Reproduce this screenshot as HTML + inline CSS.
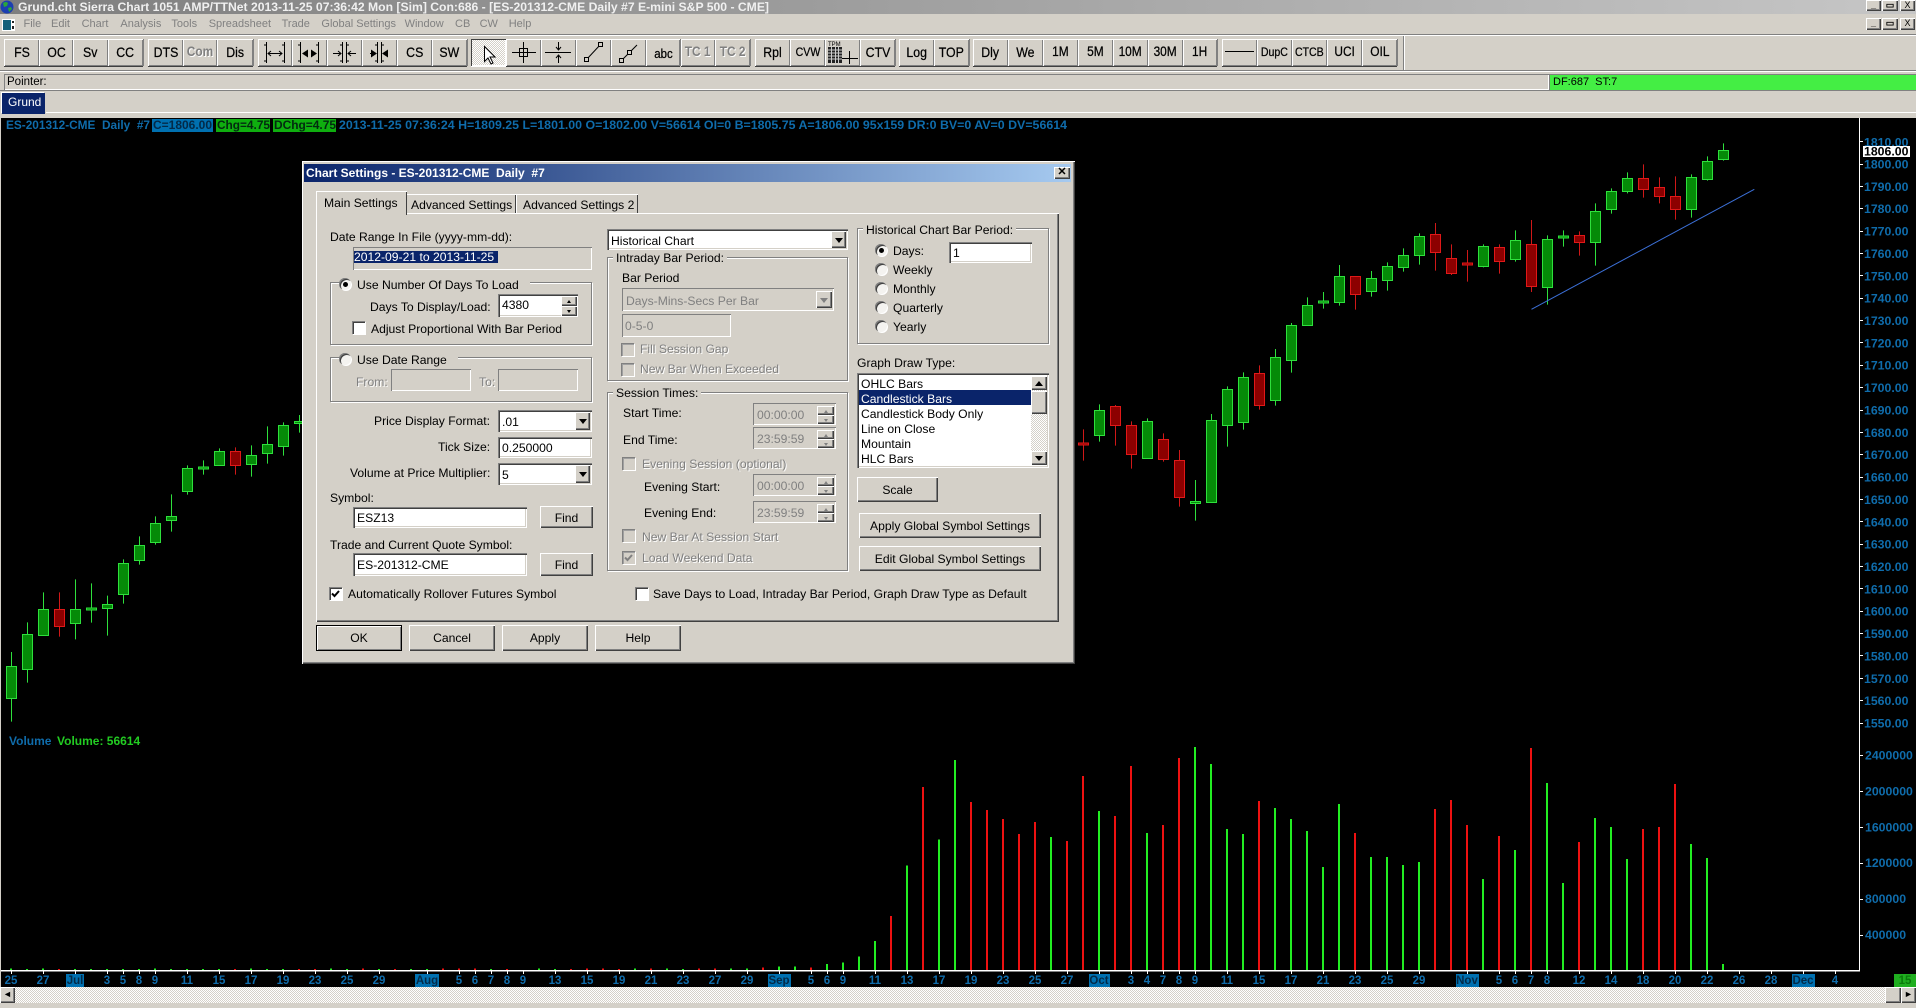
<!DOCTYPE html>
<html><head><meta charset="utf-8"><title>Sierra Chart</title>
<style>
html,body{margin:0;padding:0;background:#d4d0c8}
#p{position:relative;width:1916px;height:1008px;overflow:hidden;background:#d4d0c8;font-family:"Liberation Sans",sans-serif}
.a{position:absolute;box-sizing:border-box}
.t{position:absolute;white-space:nowrap;font:12.15px/14px "Liberation Sans",sans-serif;height:14px;color:#000}
.bg{background:#d4d0c8;padding:0 3px;margin-left:-3px}
.ds{color:#808080;text-shadow:1px 1px 0 #fff}
.gr{color:#808080}
.m{position:absolute;top:18px;font:11px/13px "Liberation Sans",sans-serif;color:#808080;white-space:nowrap}
.b{position:absolute;top:39px;height:27px;background:#d4d0c8;box-sizing:border-box;box-shadow:inset 1px 1px #fff,inset -1px -1px #808080,0 1px #404040,1px 0 #808080;text-align:center;font:14px/26px "Liberation Sans",sans-serif;color:#000;white-space:nowrap;overflow:hidden;-webkit-text-stroke:.25px #000}
.b span{display:inline-block;transform:scaleX(.88)}
.b svg{position:absolute;left:0;top:0}
.b.s{font-size:12px}
.b.dis{color:#808080;font-weight:bold;font-size:13.5px;text-shadow:1px 1px 0 #fff;-webkit-text-stroke:0}
.rb{position:absolute;box-sizing:border-box;background:#d4d0c8;box-shadow:inset 1px 1px #fff,inset -1px -1px #404040,inset -2px -2px #808080;text-align:center;font:12.15px/26px "Liberation Sans",sans-serif;color:#000;white-space:nowrap}
.in{position:absolute;box-sizing:border-box;background:#fff;box-shadow:inset 1px 1px #808080,inset 2px 2px #404040,inset -1px -1px #fff,inset -2px -2px #d4d0c8;font:12.15px/22px "Liberation Sans",sans-serif;color:#000;padding-left:4px;white-space:nowrap}
.in.dd{background:#d4d0c8;color:#808080;box-shadow:inset 1px 1px #808080,inset -1px -1px #fff;line-height:24px}
.gb{position:absolute;box-sizing:border-box;border:1px solid #808080;box-shadow:1px 1px #fff,inset 1px 1px #fff}
.rd{position:absolute;width:12px;height:12px;margin-left:-1px;border-radius:50%;background:#f4f3f0;box-shadow:inset 1px 1px 0 #808080,inset 2px 2px 0 #404040,1px 1px 0 #fff}
.rd.on::after{content:"";position:absolute;left:4px;top:4px;width:5px;height:5px;border-radius:50%;background:#000}
.cb{position:absolute;box-sizing:border-box;width:13px;height:13px;margin-left:-1px;background:#fff;box-shadow:inset 1px 1px #808080,inset 2px 2px #404040,1px 1px #fff}
.cb.dd{background:#d4d0c8;box-shadow:inset 1px 1px #808080,inset 2px 2px #a0a0a0,1px 1px #fff}
.cb svg{position:absolute;left:0;top:0}
.ar{position:absolute;box-sizing:border-box;margin-left:-1px;background:#d4d0c8;box-shadow:inset 1px 1px #fff,inset -1px -1px #404040,inset -2px -2px #808080}
.ar::after{content:"";position:absolute;left:50%;top:50%;margin:-2px 0 0 -4px;border:4px solid transparent;border-bottom:0;border-top:5px solid #000}
.ar.up::after{border-top:0;border-bottom:5px solid #000}
.ar.gy::after{border-top-color:#808080;border-bottom-color:#808080}
.ar.sm::after{margin:-1px 0 0 -2px;border-width:2px;border-top-width:3px;border-bottom-width:0}
.ar.sm.up::after{border-top-width:0;border-bottom-width:3px}
.li{position:absolute;left:861px;font:12.15px/14px "Liberation Sans",sans-serif;white-space:nowrap;color:#000}
.dth{background:repeating-conic-gradient(#d4d0c8 0 25%,#fff 0 50%) 0 0/2px 2px}
text{font-family:"Liberation Sans",sans-serif}
.pl{font-size:12.3px;font-weight:bold;fill:#0f6cab;dominant-baseline:central}
.dl{font-size:11.5px;font-weight:bold;fill:#0f6cab;text-anchor:middle;dominant-baseline:central}
.dk{fill:#032a48}
</style></head><body><div id="p">

<!-- title bar -->
<div class="a" style="left:0;top:0;width:1916px;height:14px;background:linear-gradient(90deg,#7e7e7e,#c6c6c6)"></div>
<svg class="a" style="left:0;top:0" width="800" height="14">
<circle cx="7" cy="7" r="6.5" fill="#1c3fb0"/><path d="M3 3q3-2 5 0l-1 3-3 1zM8 8l3-1 1 2-3 3z" fill="#2aa53a"/>
<text x="18" y="11" font-size="11.5" font-weight="bold" fill="#f0f0f0" textLength="751" lengthAdjust="spacingAndGlyphs">Grund.cht  Sierra Chart 1051 AMP/TTNet 2013-11-25  07:36:42 Mon [Sim]  Con:686 - [ES-201312-CME  Daily  #7  E-mini S&amp;P 500 - CME]</text></svg>
<div class="rb" style="left:1866px;top:0;width:15px;height:11px;font:bold 9px/10px 'Liberation Sans'">_</div>
<div class="rb" style="left:1882px;top:0;width:16px;height:11px;font:bold 9px/10px 'Liberation Sans'">&#9645;</div>
<div class="rb" style="left:1900px;top:0;width:15px;height:11px;font:9px/10px 'Liberation Sans'">X</div>

<!-- menu -->
<svg class="a" style="left:2px;top:19px" width="13" height="12"><rect width="13" height="12" fill="#fff"/><rect x="1" y="1" width="8" height="10" fill="#12607a"/><rect x="10" y="2" width="2" height="2" fill="#222"/><rect x="10" y="7" width="2" height="3" fill="#222"/></svg>
<div class="m" style="left:23.5px">File</div><div class="m" style="left:51px">Edit</div><div class="m" style="left:81.6px">Chart</div><div class="m" style="left:120.4px">Analysis</div><div class="m" style="left:171.4px">Tools</div><div class="m" style="left:208.7px">Spreadsheet</div><div class="m" style="left:281.6px">Trade</div><div class="m" style="left:321.4px">Global Settings</div><div class="m" style="left:404.6px">Window</div><div class="m" style="left:455px">CB</div><div class="m" style="left:479.6px">CW</div><div class="m" style="left:508.7px">Help</div>
<div class="rb" style="left:1866px;top:18px;width:15px;height:12px;font:bold 9px/10px 'Liberation Sans'">_</div>
<div class="rb" style="left:1882px;top:18px;width:16px;height:12px;font:bold 9px/10px 'Liberation Sans'">&#9645;</div>
<div class="rb" style="left:1900px;top:18px;width:15px;height:12px;font:9px/11px 'Liberation Sans'">X</div>
<div class="a" style="left:0;top:34px;width:1916px;height:1px;background:#808080"></div>
<div class="a" style="left:0;top:35px;width:1916px;height:1px;background:#fff"></div>

<!-- toolbar -->
<div class="b" style="left:4px;width:35px"><span>FS</span></div>
<div class="b" style="left:39px;width:34px"><span>OC</span></div>
<div class="b" style="left:73px;width:35px"><span>Sv</span></div>
<div class="b" style="left:108px;width:35px"><span>CC</span></div>
<div class="b" style="left:148px;width:35px"><span>DTS</span></div>
<div class="b dis" style="left:183px;width:34px"><span>Com</span></div>
<div class="b" style="left:217px;width:36px"><span>Dis</span></div>
<div class="b" style="left:258px;width:34px"><svg width="34" height="27" stroke="#000" fill="none"><path d="M8.5 3v21M26.5 3v21M6 6h3M6 22h3M24 6h3M24 22h3M10 14.5h14M13 12l-3 2.5 3 2.5M21 12l3 2.5-3 2.5"/></svg></div>
<div class="b" style="left:292px;width:35px"><svg width="35" height="27" stroke="#000" fill="none"><path d="M8.5 3v21M26.5 3v21M6 6h3M6 22h3M24 6h3M24 22h3"/><path d="M10 14.5l6-4v8zM25 14.5l-6-4v8z" fill="#000" stroke="none"/></svg></div>
<div class="b" style="left:327px;width:35px"><svg width="35" height="27" stroke="#000" fill="none"><path d="M15.5 3v21M19.5 3v21M13 6h3M13 22h3M19 6h3M19 22h3M6 14.5h8M11 12l3 2.5-3 2.5M29 14.5h-8M24 12l-3 2.5 3 2.5"/></svg></div>
<div class="b" style="left:362px;width:35px"><svg width="35" height="27" stroke="#000" fill="none"><path d="M15.5 3v21M19.5 3v21M13 6h3M13 22h3M19 6h3M19 22h3"/><path d="M8 14.5h2" /><path d="M15 14.5l-6-4v8zM20 14.5l6-4v8z" fill="#000" stroke="none"/></svg></div>
<div class="b" style="left:397px;width:35px"><span>CS</span></div>
<div class="b" style="left:432px;width:35px"><span>SW</span></div>
<div class="b dth" style="left:471px;width:35px;box-shadow:inset 1px 1px #404040,inset -1px -1px #fff,0 1px #fff,1px 0 #fff"><svg width="35" height="27" fill="#fff" stroke="#000"><path d="M13.5 7.500v15l3.500-3.500 3 6 2-1-3-6h5z"/></svg></div>
<div class="b" style="left:506px;width:35px"><svg width="35" height="27" stroke="#000" fill="none"><path d="M17.500 3v21M6 13.500h24"/><rect x="13.500" y="9.500" width="8" height="8"/></svg></div>
<div class="b" style="left:541px;width:35px"><svg width="35" height="27" stroke="#000" fill="none"><path d="M4 13.500h26M17.500 3v7M17.500 17v7M15 8l2.500 3 2.500-3M15 19l2.500-3 2.500 3"/></svg></div>
<div class="b" style="left:576px;width:35px"><svg width="35" height="27" stroke="#000" fill="none"><path d="M11 20l13-14"/><rect x="8.500" y="18.500" width="4" height="4" fill="#d4d0c8"/><rect x="22.500" y="3.500" width="4" height="4" fill="#d4d0c8"/></svg></div>
<div class="b" style="left:611px;width:35px"><svg width="35" height="27" stroke="#000" fill="none"><path d="M11 21l15-15"/><rect x="8.500" y="19.500" width="4" height="4" fill="#d4d0c8"/><rect x="16.500" y="11.500" width="4" height="4" fill="#d4d0c8"/></svg></div>
<div class="b" style="left:646px;width:34px;font-size:13px;line-height:29px"><span>abc</span></div>
<div class="b dis" style="left:681px;width:34px"><span>TC 1</span></div>
<div class="b dis" style="left:715px;width:35px"><span>TC 2</span></div>
<div class="b" style="left:755px;width:35px"><span>Rpl</span></div>
<div class="b s" style="left:790px;width:35px"><span>CVW</span></div>
<div class="b" style="left:825px;width:35px"><svg width="35" height="27"><text x="3" y="7" font-size="6" fill="#000">TPM</text><rect x="3" y="8" width="14" height="16" fill="#222"/><path d="M3 11h14M3 14h14M3 17h14M3 20h14M6.500 8v16M10.500 8v16M13.500 8v16" stroke="#ccc"/><path d="M17 19.500h16M24.500 12v13" stroke="#000"/></svg></div>
<div class="b" style="left:860px;width:35px"><span>CTV</span></div>
<div class="b" style="left:899px;width:35px"><span>Log</span></div>
<div class="b" style="left:934px;width:35px"><span>TOP</span></div>
<div class="b" style="left:973px;width:35px"><span>Dly</span></div>
<div class="b" style="left:1008px;width:35px"><span>We</span></div>
<div class="b s" style="left:1043px;width:35px;font-size:13.5px"><span>1M</span></div>
<div class="b s" style="left:1078px;width:35px;font-size:13.5px"><span>5M</span></div>
<div class="b s" style="left:1113px;width:35px;font-size:13.5px"><span>10M</span></div>
<div class="b s" style="left:1148px;width:35px;font-size:13.5px"><span>30M</span></div>
<div class="b s" style="left:1183px;width:34px;font-size:13.5px"><span>1H</span></div>
<div class="b" style="left:1222px;width:35px"><svg width="35" height="27"><path d="M3 12.500h29" stroke="#000"/></svg></div>
<div class="b s" style="left:1257px;width:35px"><span>DupC</span></div>
<div class="b s" style="left:1292px;width:35px"><span>CTCB</span></div>
<div class="b" style="left:1327px;width:35px;font-size:13.5px"><span>UCI</span></div>
<div class="b" style="left:1362px;width:35px;font-size:13.5px"><span>OIL</span></div>
<div class="a" style="left:1403px;top:36px;width:1px;height:34px;background:#808080"></div>
<div class="a" style="left:1404px;top:36px;width:1px;height:34px;background:#fff"></div>
<div class="a" style="left:0;top:70px;width:1916px;height:1px;background:#808080"></div>
<div class="a" style="left:0;top:71px;width:1916px;height:1px;background:#fff"></div>

<!-- status -->
<div class="a" style="left:4px;top:74px;width:1545px;height:16px;box-shadow:inset 1px 1px #808080,inset -1px -1px #fff"></div>
<div class="t" style="left:7px;top:75px;font-size:11.5px">Pointer:</div>
<div class="a" style="left:1549px;top:74px;width:367px;height:16px;background:#44ee44;box-shadow:inset 1px 1px #808080"></div>
<div class="t" style="left:1553px;top:75px;font-size:11px">DF:687&nbsp; ST:7</div>
<div class="a" style="left:0;top:90px;width:1916px;height:1px;background:#808080"></div>
<div class="a" style="left:2px;top:93px;width:43px;height:21px;background:#0a246a;box-shadow:-1px -1px #fff;color:#fff;font:12px/18px 'Liberation Sans';padding-left:6px">Grund</div>
<div class="a" style="left:0;top:112px;width:1916px;height:1px;background:#fff;clip-path:inset(0 0 0 46px)"></div>

<!-- chart -->
<svg class="a" style="left:0;top:0" width="1916" height="1008" shape-rendering="crispEdges">
<rect x="1" y="118" width="1915" height="870" fill="#000"/>
<rect x="1859" y="118" width="1" height="853" fill="#fff"/>
<rect x="1" y="970" width="1859" height="1.500" fill="#fff"/>
<!-- info -->
<rect x="152" y="119" width="61" height="13" fill="#0070b0"/><rect x="216" y="119" width="54" height="13" fill="#0fae0f"/><rect x="273" y="119" width="63" height="13" fill="#0fae0f"/>
<g font-size="12" font-weight="bold" style="dominant-baseline:central">
<text x="6" y="125" fill="#0f6cab" textLength="144" lengthAdjust="spacingAndGlyphs" style="dominant-baseline:central">ES-201312-CME&#160; Daily&#160; #7</text>
<text x="153" y="125" fill="#032a48" textLength="59" lengthAdjust="spacingAndGlyphs" style="dominant-baseline:central">C=1806.00</text>
<text x="217" y="125" fill="#032a10" textLength="53" lengthAdjust="spacingAndGlyphs" style="dominant-baseline:central">Chg=4.75</text>
<text x="274" y="125" fill="#032a10" textLength="62" lengthAdjust="spacingAndGlyphs" style="dominant-baseline:central">DChg=4.75</text>
<text x="339" y="125" fill="#0f6cab" textLength="728" lengthAdjust="spacingAndGlyphs" style="dominant-baseline:central">2013-11-25 07:36:24 H=1809.25 L=1801.00 O=1802.00 V=56614 OI=0 B=1805.75 A=1806.00 95x159 DR:0 BV=0 AV=0 DV=56614</text>
</g>
<!-- price axis -->
<path stroke="#fff" d="M1859 141.500h4M1859 164.500h4M1859 186.500h4M1859 208.500h4M1859 231.500h4M1859 253.500h4M1859 275.500h4M1859 298.500h4M1859 320.500h4M1859 342.500h4M1859 365.500h4M1859 387.500h4M1859 410.500h4M1859 432.500h4M1859 454.500h4M1859 477.500h4M1859 499.500h4M1859 521.500h4M1859 544.500h4M1859 566.500h4M1859 588.500h4M1859 611.500h4M1859 633.500h4M1859 655.500h4M1859 678.500h4M1859 700.500h4M1859 723.500h4M1859 755.500h4M1859 791.500h4M1859 827.500h4M1859 863.500h4M1859 899.500h4M1859 935.500h4"/>
<g class="pl"><text class="pl" x="1864" y="142.300">1810.00</text><text class="pl" x="1864" y="164.500">1800.00</text><text class="pl" x="1864" y="186.900">1790.00</text><text class="pl" x="1864" y="209.200">1780.00</text><text class="pl" x="1864" y="231.600">1770.00</text><text class="pl" x="1864" y="253.900">1760.00</text><text class="pl" x="1864" y="276.300">1750.00</text><text class="pl" x="1864" y="298.700">1740.00</text><text class="pl" x="1864" y="321">1730.00</text><text class="pl" x="1864" y="343.400">1720.00</text><text class="pl" x="1864" y="365.700">1710.00</text><text class="pl" x="1864" y="388.100">1700.00</text><text class="pl" x="1864" y="410.500">1690.00</text><text class="pl" x="1864" y="432.800">1680.00</text><text class="pl" x="1864" y="455.200">1670.00</text><text class="pl" x="1864" y="477.500">1660.00</text><text class="pl" x="1864" y="499.900">1650.00</text><text class="pl" x="1864" y="522.300">1640.00</text><text class="pl" x="1864" y="544.600">1630.00</text><text class="pl" x="1864" y="567">1620.00</text><text class="pl" x="1864" y="589.300">1610.00</text><text class="pl" x="1864" y="611.700">1600.00</text><text class="pl" x="1864" y="634.100">1590.00</text><text class="pl" x="1864" y="656.400">1580.00</text><text class="pl" x="1864" y="678.800">1570.00</text><text class="pl" x="1864" y="701.100">1560.00</text><text class="pl" x="1864" y="723.500">1550.00</text>
<text class="pl" x="1865" y="755.700">2400000</text><text class="pl" x="1865" y="791.700">2000000</text><text class="pl" x="1865" y="827.700">1600000</text><text class="pl" x="1865" y="863">1200000</text><text class="pl" x="1865" y="899">800000</text><text class="pl" x="1865" y="935">400000</text></g>
<rect x="1863" y="146" width="47" height="11" fill="#fff"/><text x="1864" y="151.500" font-size="12.3" font-weight="bold" fill="#000" style="dominant-baseline:central">1806.00</text>

<!-- left candles -->
<g transform="translate(0,400) scale(1,.33333)">
<path fill="none" stroke="#2ee03c" d="M11.500 756V965M27.500 667V848M43.500 577V707M75.500 538V718M91.500 550V668M107.500 587V707M123.500 478V611M139.500 409V494M155.500 349V434M171.500 283V395M187.500 196V284M203.500 181V224M219.500 145V197M251.500 136V230M267.500 79V191M283.500 67V167M299.500 45V98"/>
<path fill="none" stroke="#d01818" d="M59.500 577V710M235.500 142V224"/>
<path fill="#058a08" stroke="#2ee03c" d="M6.500 799h10V895h-10zM22.500 703h10V808h-10zM38.500 628h10V707h-10zM70.500 628h10V670h-10zM86.500 624h10V630h-10zM102.500 613h10V625h-10zM118.500 490h10V584h-10zM134.500 436h10V482h-10zM150.500 370h10V428h-10zM166.500 349h10V361h-10zM182.500 205h10V275h-10zM198.500 201h10V207h-10zM214.500 154h10V196h-10zM246.500 166h10V193h-10zM262.500 133h10V160h-10zM278.500 76h10V139h-10zM294.500 65h10V70h-10z" style="vector-effect:non-scaling-stroke"/>
<path fill="#8c0000" stroke="#e01818" style="vector-effect:non-scaling-stroke" d="M54.500 628h10V680h-10zM230.500 154h10V196h-10z"/>
</g>
<!-- right candles -->
<g transform="translate(0,120) scale(1,.33333)">
<path fill="none" stroke="#2ee03c" d="M1099.500 853V965M1147.500 895V1016M1195.500 1080V1202M1211.500 882V1147M1227.500 799V980M1243.500 757V929M1275.500 687V857M1291.500 609V758M1307.500 532V617M1323.500 516V566M1339.500 435V557M1371.500 453V530M1387.500 427V512M1403.500 385V455M1419.500 340V434M1483.500 373V442M1515.500 331V425M1547.500 346V554M1563.500 331V380M1595.500 250V437M1611.500 205V281M1627.500 157V220M1691.500 163V293M1707.500 109V182M1723.500 70V122"/>
<path fill="none" stroke="#d01818" d="M1083.500 928V1022M1115.500 855V977M1131.500 904V1046M1163.500 940V1025M1179.500 990V1160M1259.500 736V869M1355.500 469V569M1435.500 309V452M1451.500 373V465M1467.500 390V485M1499.500 373V461M1531.500 300V516M1579.500 334V407M1643.500 133V233M1659.500 172V250M1675.500 169V299"/>
<path fill="#058a08" stroke="#2ee03c" style="vector-effect:non-scaling-stroke" d="M1094.500 871h10V946h-10zM1142.500 904h10V1015h-10zM1190.500 1144h10V1150h-10zM1206.500 901h10V1147h-10zM1222.500 808h10V916h-10zM1238.500 772h10V907h-10zM1270.500 712h10V841h-10zM1286.500 616h10V721h-10zM1302.500 556h10V616h-10zM1318.500 543h10V549h-10zM1334.500 469h10V547h-10zM1366.500 475h10V515h-10zM1382.500 439h10V482h-10zM1398.500 406h10V442h-10zM1414.500 349h10V406h-10zM1478.500 379h10V439h-10zM1510.500 361h10V418h-10zM1542.500 358h10V502h-10zM1558.500 348h10V354h-10zM1590.500 274h10V367h-10zM1606.500 214h10V268h-10zM1622.500 175h10V214h-10zM1686.500 172h10V268h-10zM1702.500 124h10V178h-10zM1718.500 91h10V118h-10z"/>
<path fill="#8c0000" stroke="#e01818" style="vector-effect:non-scaling-stroke" d="M1078.500 969h10V975h-10zM1110.500 859h10V916h-10zM1126.500 916h10V1003h-10zM1158.500 958h10V1018h-10zM1174.500 1021h10V1132h-10zM1254.500 760h10V856h-10zM1350.500 469h10V523h-10zM1430.500 343h10V398h-10zM1446.500 415h10V460h-10zM1462.500 429h10V435h-10zM1494.500 382h10V425h-10zM1526.500 373h10V499h-10zM1574.500 346h10V368h-10zM1638.500 175h10V208h-10zM1654.500 202h10V229h-10zM1670.500 229h10V268h-10z"/>
</g>
<path d="M1531.500 309.300L1754.300 189.300" stroke="#3c70d8" fill="none" shape-rendering="auto"/>

<text x="9" y="741" font-size="12" font-weight="bold" fill="#0f6cab" style="dominant-baseline:central">Volume</text>
<text x="57" y="741" font-size="12" font-weight="bold" fill="#22cc22" style="dominant-baseline:central">Volume: 56614</text>

<!-- volume bars -->
<g transform="translate(0,740) scale(1,.33333)">
<path fill="#22ee22" d="M10 685h2V690h-2zM26 687h2V690h-2zM42 685h2V690h-2zM74 687h2V690h-2zM90 687h2V690h-2zM106 687h2V690h-2zM122 687h2V690h-2zM138 687h2V690h-2zM154 686h2V690h-2zM170 687h2V690h-2zM186 687h2V690h-2zM202 687h2V690h-2zM218 687h2V690h-2zM250 685h2V690h-2zM266 687h2V690h-2zM282 687h2V690h-2zM330 685h2V690h-2zM346 687h2V690h-2zM378 687h2V690h-2zM410 687h2V690h-2zM426 687h2V690h-2zM490 687h2V690h-2zM538 685h2V690h-2zM554 687h2V690h-2zM634 685h2V690h-2zM666 685h2V690h-2zM682 687h2V690h-2zM730 685h2V690h-2zM746 685h2V690h-2zM778 679h2V690h-2zM794 679h2V690h-2zM826 672h2V690h-2zM842 667h2V690h-2zM858 649h2V690h-2zM874 603h2V690h-2zM906 376h2V690h-2zM938 298h2V690h-2zM954 60h2V690h-2zM1050 291h2V690h-2zM1098 213h2V690h-2zM1146 279h2V690h-2zM1194 21h2V690h-2zM1210 72h2V690h-2zM1226 267h2V690h-2zM1242 282h2V690h-2zM1274 204h2V690h-2zM1290 237h2V690h-2zM1306 273h2V690h-2zM1322 381h2V690h-2zM1338 192h2V690h-2zM1370 351h2V690h-2zM1386 351h2V690h-2zM1402 375h2V690h-2zM1418 366h2V690h-2zM1482 417h2V690h-2zM1514 330h2V690h-2zM1546 129h2V690h-2zM1562 429h2V690h-2zM1594 234h2V690h-2zM1610 261h2V690h-2zM1626 357h2V690h-2zM1690 312h2V690h-2zM1706 354h2V690h-2zM1722 672h2V690h-2z"/>
<path fill="#ee1111" d="M58 687h2V690h-2zM234 687h2V690h-2zM298 687h2V690h-2zM314 687h2V690h-2zM362 686h2V690h-2zM394 687h2V690h-2zM442 686h2V690h-2zM458 686h2V690h-2zM474 686h2V690h-2zM506 687h2V690h-2zM570 687h2V690h-2zM586 685h2V690h-2zM602 685h2V690h-2zM618 687h2V690h-2zM650 685h2V690h-2zM698 685h2V690h-2zM714 685h2V690h-2zM762 682h2V690h-2zM810 682h2V690h-2zM890 528h2V690h-2zM922 141h2V690h-2zM970 186h2V690h-2zM986 210h2V690h-2zM1002 237h2V690h-2zM1018 282h2V690h-2zM1034 246h2V690h-2zM1066 303h2V690h-2zM1082 108h2V690h-2zM1114 228h2V690h-2zM1130 78h2V690h-2zM1162 255h2V690h-2zM1178 54h2V690h-2zM1258 183h2V690h-2zM1354 279h2V690h-2zM1434 207h2V690h-2zM1450 180h2V690h-2zM1466 255h2V690h-2zM1498 288h2V690h-2zM1530 24h2V690h-2zM1578 306h2V690h-2zM1642 267h2V690h-2zM1658 261h2V690h-2zM1674 132h2V690h-2z"/>
</g>
<!-- date ticks -->
<path stroke="#fff" d="M11.500 970v4M43.500 970v4M75.500 970v4M107.500 970v4M123.500 970v4M139.500 970v4M155.500 970v4M187.500 970v4M219.500 970v4M251.500 970v4M283.500 970v4M315.500 970v4M347.500 970v4M379.500 970v4M427.500 970v4M459.500 970v4M475.500 970v4M491.500 970v4M507.500 970v4M523.500 970v4M555.500 970v4M587.500 970v4M619.500 970v4M651.500 970v4M683.500 970v4M715.500 970v4M747.500 970v4M779.500 970v4M811.500 970v4M827.500 970v4M843.500 970v4M875.500 970v4M907.500 970v4M939.500 970v4M971.500 970v4M1003.500 970v4M1035.500 970v4M1067.500 970v4M1099.500 970v4M1131.500 970v4M1147.500 970v4M1163.500 970v4M1179.500 970v4M1195.500 970v4M1227.500 970v4M1259.500 970v4M1291.500 970v4M1323.500 970v4M1355.500 970v4M1387.500 970v4M1419.500 970v4M1467.500 970v4M1499.500 970v4M1515.500 970v4M1531.500 970v4M1547.500 970v4M1579.500 970v4M1611.500 970v4M1643.500 970v4M1675.500 970v4M1707.500 970v4M1739.500 970v4M1771.500 970v4M1803.500 970v4M1835.500 970v4"/>
<rect x="66" y="974" width="18" height="13" fill="#0070b0"/><rect x="415" y="974" width="24" height="13" fill="#0070b0"/><rect x="768" y="974" width="23" height="13" fill="#0070b0"/><rect x="1089" y="974" width="21" height="13" fill="#0070b0"/><rect x="1456" y="974" width="23" height="13" fill="#0070b0"/><rect x="1792" y="974" width="23" height="13" fill="#0070b0"/><rect x="1894" y="974" width="22" height="13" fill="#1fae1f"/>
<text class="dl" x="11" y="981">25</text><text class="dl" x="43" y="981">27</text><text class="dl dk" x="75" y="981">Jul</text><text class="dl" x="107" y="981">3</text><text class="dl" x="123" y="981">5</text><text class="dl" x="139" y="981">8</text><text class="dl" x="155" y="981">9</text><text class="dl" x="187" y="981">11</text><text class="dl" x="219" y="981">15</text><text class="dl" x="251" y="981">17</text><text class="dl" x="283" y="981">19</text><text class="dl" x="315" y="981">23</text><text class="dl" x="347" y="981">25</text><text class="dl" x="379" y="981">29</text><text class="dl dk" x="427" y="981">Aug</text><text class="dl" x="459" y="981">5</text><text class="dl" x="475" y="981">6</text><text class="dl" x="491" y="981">7</text><text class="dl" x="507" y="981">8</text><text class="dl" x="523" y="981">9</text><text class="dl" x="555" y="981">13</text><text class="dl" x="587" y="981">15</text><text class="dl" x="619" y="981">19</text><text class="dl" x="651" y="981">21</text><text class="dl" x="683" y="981">23</text><text class="dl" x="715" y="981">27</text><text class="dl" x="747" y="981">29</text><text class="dl dk" x="779" y="981">Sep</text><text class="dl" x="811" y="981">5</text><text class="dl" x="827" y="981">6</text><text class="dl" x="843" y="981">9</text><text class="dl" x="875" y="981">11</text><text class="dl" x="907" y="981">13</text><text class="dl" x="939" y="981">17</text><text class="dl" x="971" y="981">19</text><text class="dl" x="1003" y="981">23</text><text class="dl" x="1035" y="981">25</text><text class="dl" x="1067" y="981">27</text><text class="dl dk" x="1099" y="981">Oct</text><text class="dl" x="1131" y="981">3</text><text class="dl" x="1147" y="981">4</text><text class="dl" x="1163" y="981">7</text><text class="dl" x="1179" y="981">8</text><text class="dl" x="1195" y="981">9</text><text class="dl" x="1227" y="981">11</text><text class="dl" x="1259" y="981">15</text><text class="dl" x="1291" y="981">17</text><text class="dl" x="1323" y="981">21</text><text class="dl" x="1355" y="981">23</text><text class="dl" x="1387" y="981">25</text><text class="dl" x="1419" y="981">29</text><text class="dl dk" x="1467" y="981">Nov</text><text class="dl" x="1499" y="981">5</text><text class="dl" x="1515" y="981">6</text><text class="dl" x="1531" y="981">7</text><text class="dl" x="1547" y="981">8</text><text class="dl" x="1579" y="981">12</text><text class="dl" x="1611" y="981">14</text><text class="dl" x="1643" y="981">18</text><text class="dl" x="1675" y="981">20</text><text class="dl" x="1707" y="981">22</text><text class="dl" x="1739" y="981">26</text><text class="dl" x="1771" y="981">28</text><text class="dl dk" x="1803" y="981">Dec</text><text class="dl" x="1835" y="981">4</text><text class="dl" x="1905" y="981" style="fill:#0b7a0b">15</text>
</svg>

<!-- bottom scrollbar -->
<div class="a dth" style="left:0;top:987px;width:1916px;height:16px"></div>
<div class="rb" style="left:0;top:987px;width:15px;height:16px;font:9px/15px 'Liberation Sans'">&#9668;</div>
<div class="rb" style="left:1885px;top:987px;width:16px;height:16px"></div>
<div class="rb" style="left:1901px;top:987px;width:15px;height:16px;font:9px/15px 'Liberation Sans'">&#9658;</div>

<!-- DIALOG -->
<div class="a" style="left:302px;top:161px;width:773px;height:503px;background:#d4d0c8;box-shadow:inset 1px 1px #fff,inset -1px -1px #404040,inset -2px -2px #808080"></div>
<div class="a" style="left:304px;top:164px;width:767px;height:18px;background:linear-gradient(90deg,#0a246a,#a6caf0)"></div>
<div class="t" style="left:306px;top:166px;color:#fff;font-weight:bold;font-size:12px">Chart Settings - ES-201312-CME&nbsp; Daily&nbsp; #7</div>
<div class="rb" style="left:1054px;top:167px;width:16px;height:12px;font:bold 11px/11px 'Liberation Sans'">&#10005;</div>

<!-- panel -->
<div class="a" style="left:316px;top:213px;width:743px;height:409px;box-shadow:inset 1px 1px #fff,inset -1px -1px #404040,inset -2px -2px #808080"></div>
<div class="a" style="left:405px;top:194px;width:111px;height:20px;box-shadow:inset 1px 1px #fff,inset -1px 0 #404040;background:#d4d0c8"></div>
<div class="a" style="left:516px;top:194px;width:122px;height:20px;box-shadow:inset 1px 1px #fff,inset -1px 0 #404040;background:#d4d0c8"></div>
<div class="a" style="left:316px;top:191px;width:91px;height:24px;box-shadow:inset 1px 1px #fff,inset -1px 0 #404040;background:#d4d0c8"></div>
<div class="a" style="left:316px;top:213px;width:743px;height:1px;background:#fff;clip-path:inset(0 0 0 91px)"></div>
<div class="t" style="left:324px;top:196px">Main Settings</div>
<div class="t" style="left:411px;top:198px">Advanced Settings</div>
<div class="t" style="left:523px;top:198px">Advanced Settings 2</div>

<!-- left col -->
<div class="t" style="left:330px;top:230px">Date Range In File (yyyy-mm-dd):</div>
<div class="a" style="left:353px;top:247px;width:239px;height:23px;box-shadow:inset 1px 1px #808080,inset -1px -1px #fff"></div>
<div class="a" style="left:354px;top:251px;width:144px;height:12px;background:#0a246a"></div>
<div class="t" style="left:354px;top:250px;color:#fff">2012-09-21 to 2013-11-25</div>

<div class="gb" style="left:330px;top:282px;width:262px;height:63px"></div>
<div class="a" style="left:340px;top:278px;width:190px;height:12px;background:#d4d0c8"></div>
<div class="rd on" style="left:340px;top:278px"></div>
<div class="t" style="left:357px;top:278px">Use Number Of Days To Load</div>
<div class="t" style="left:370px;top:300px">Days To Display/Load:</div>
<div class="in" style="left:498px;top:294px;width:80px;height:23px">4380</div>
<div class="ar up sm" style="left:562px;top:296px;width:16px;height:10px"></div>
<div class="ar sm" style="left:562px;top:306px;width:16px;height:10px"></div>
<div class="cb" style="left:353px;top:321px"></div>
<div class="t" style="left:371px;top:322px">Adjust Proportional With Bar Period</div>

<div class="gb" style="left:330px;top:357px;width:262px;height:45px"></div>
<div class="a" style="left:340px;top:353px;width:118px;height:12px;background:#d4d0c8"></div>
<div class="rd" style="left:340px;top:353px"></div>
<div class="t" style="left:357px;top:353px">Use Date Range</div>
<div class="t ds" style="left:356px;top:375px">From:</div>
<div class="in dd" style="left:391px;top:369px;width:80px;height:22px"></div>
<div class="t ds" style="left:479px;top:375px">To:</div>
<div class="in dd" style="left:498px;top:369px;width:80px;height:22px"></div>

<div class="t" style="left:374px;top:414px">Price Display Format:</div>
<div class="in" style="left:498px;top:410px;width:94px;height:22px;line-height:24px">.01</div>
<div class="ar" style="left:576px;top:412px;width:15px;height:18px"></div>
<div class="t" style="left:438px;top:440px">Tick Size:</div>
<div class="in" style="left:498px;top:437px;width:94px;height:21px">0.250000</div>
<div class="t" style="left:350px;top:466px">Volume at Price Multiplier:</div>
<div class="in" style="left:498px;top:463px;width:94px;height:22px;line-height:24px">5</div>
<div class="ar" style="left:576px;top:465px;width:15px;height:18px"></div>
<div class="t" style="left:330px;top:491px">Symbol:</div>
<div class="in" style="left:353px;top:507px;width:174px;height:21px">ESZ13</div>
<div class="rb" style="left:540px;top:506px;width:53px;height:22px;line-height:24px">Find</div>
<div class="t" style="left:330px;top:538px">Trade and Current Quote Symbol:</div>
<div class="in" style="left:353px;top:553px;width:174px;height:23px;line-height:24px">ES-201312-CME</div>
<div class="rb" style="left:540px;top:553px;width:53px;height:23px;line-height:25px">Find</div>
<div class="cb" style="left:330px;top:587px"><svg width="13" height="13"><path d="M3 6.500l2.500 2.500L10 4" fill="none" stroke="#000" stroke-width="2"/></svg></div>
<div class="t" style="left:348px;top:587px">Automatically Rollover Futures Symbol</div>

<!-- middle col -->
<div class="in" style="left:607px;top:229px;width:241px;height:21px;line-height:24px">Historical Chart</div>
<div class="ar" style="left:832px;top:231px;width:15px;height:17px"></div>
<div class="gb" style="left:607px;top:257px;width:241px;height:124px"></div>
<div class="t bg" style="left:616px;top:251px">Intraday Bar Period:</div>
<div class="t" style="left:622px;top:271px">Bar Period</div>
<div class="in dd" style="left:622px;top:288px;width:212px;height:23px;line-height:26px">Days-Mins-Secs Per Bar</div>
<div class="ar gy" style="left:817px;top:291px;width:16px;height:17px"></div>
<div class="in dd" style="left:622px;top:314px;width:109px;height:23px;padding-left:3px">0-5-0</div>
<div class="cb dd" style="left:622px;top:343px"></div><div class="t ds" style="left:640px;top:342px">Fill Session Gap</div>
<div class="cb dd" style="left:622px;top:363px"></div><div class="t ds" style="left:640px;top:362px">New Bar When Exceeded</div>

<div class="gb" style="left:607px;top:392px;width:241px;height:179px"></div>
<div class="t bg" style="left:616px;top:386px">Session Times:</div>
<div class="t" style="left:623px;top:406px">Start Time:</div>
<div class="in dd" style="left:753px;top:403px;width:83px;height:22px">00:00:00</div>
<div class="ar up sm gy" style="left:818px;top:406px;width:17px;height:9px"></div><div class="ar sm gy" style="left:818px;top:415px;width:17px;height:9px"></div>
<div class="t" style="left:623px;top:433px">End Time:</div>
<div class="in dd" style="left:753px;top:427px;width:83px;height:22px">23:59:59</div>
<div class="ar up sm gy" style="left:818px;top:430px;width:17px;height:9px"></div><div class="ar sm gy" style="left:818px;top:439px;width:17px;height:9px"></div>
<div class="cb dd" style="left:623px;top:457px"></div><div class="t ds" style="left:642px;top:457px">Evening Session (optional)</div>
<div class="t" style="left:644px;top:480px">Evening Start:</div>
<div class="in dd" style="left:753px;top:474px;width:83px;height:22px">00:00:00</div>
<div class="ar up sm gy" style="left:818px;top:477px;width:17px;height:9px"></div><div class="ar sm gy" style="left:818px;top:486px;width:17px;height:9px"></div>
<div class="t" style="left:644px;top:506px">Evening End:</div>
<div class="in dd" style="left:753px;top:501px;width:83px;height:22px">23:59:59</div>
<div class="ar up sm gy" style="left:818px;top:504px;width:17px;height:9px"></div><div class="ar sm gy" style="left:818px;top:513px;width:17px;height:9px"></div>
<div class="cb dd" style="left:623px;top:529px"></div><div class="t ds" style="left:642px;top:530px">New Bar At Session Start</div>
<div class="cb dd" style="left:623px;top:551px"><svg width="13" height="13"><path d="M3 6.500l2.500 2.500L10 4" fill="none" stroke="#808080" stroke-width="2"/></svg></div><div class="t ds" style="left:642px;top:551px">Load Weekend Data</div>
<div class="cb" style="left:636px;top:587px"></div>
<div class="t" style="left:653px;top:587px">Save Days to Load, Intraday Bar Period, Graph Draw Type as Default</div>

<!-- right col -->
<div class="gb" style="left:857px;top:228px;width:192px;height:116px"></div>
<div class="t bg" style="left:866px;top:223px">Historical Chart Bar Period:</div>
<div class="rd on" style="left:876px;top:244px"></div><div class="t" style="left:893px;top:244px">Days:</div>
<div class="in" style="left:949px;top:242px;width:83px;height:21px">1</div>
<div class="rd" style="left:876px;top:263px"></div><div class="t" style="left:893px;top:263px">Weekly</div>
<div class="rd" style="left:876px;top:282px"></div><div class="t" style="left:893px;top:282px">Monthly</div>
<div class="rd" style="left:876px;top:301px"></div><div class="t" style="left:893px;top:301px">Quarterly</div>
<div class="rd" style="left:876px;top:320px"></div><div class="t" style="left:893px;top:320px">Yearly</div>
<div class="t" style="left:857px;top:356px">Graph Draw Type:</div>
<div class="in" style="left:857px;top:373px;width:192px;height:95px"></div>
<div class="a" style="left:859px;top:390px;width:173px;height:15px;background:#0a246a"></div>
<div class="li" style="top:377px">OHLC Bars</div>
<div class="li" style="top:392px;color:#fff">Candlestick Bars</div>
<div class="li" style="top:407px">Candlestick Body Only</div>
<div class="li" style="top:422px">Line on Close</div>
<div class="li" style="top:437px">Mountain</div>
<div class="li" style="top:452px">HLC Bars</div>
<div class="a dth" style="left:1031px;top:376px;width:16px;height:89px"></div>
<div class="ar up" style="left:1032px;top:376px;width:16px;height:14px"></div>
<div class="rb" style="left:1031px;top:391px;width:16px;height:23px"></div>
<div class="ar" style="left:1032px;top:451px;width:16px;height:14px"></div>
<div class="rb" style="left:857px;top:477px;width:81px;height:25px;line-height:26px">Scale</div>
<div class="rb" style="left:859px;top:513px;width:182px;height:25px;line-height:27px">Apply Global Symbol Settings</div>
<div class="rb" style="left:859px;top:546px;width:182px;height:25px;line-height:26px">Edit Global Symbol Settings</div>

<!-- footer line & buttons -->
<div class="rb" style="left:316px;top:625px;width:86px;height:26px;line-height:27px;box-shadow:inset 0 0 0 1px #000,inset 2px 2px #fff,inset -2px -2px #808080">OK</div>
<div class="rb" style="left:409px;top:625px;width:86px;height:26px;line-height:27px">Cancel</div>
<div class="rb" style="left:502px;top:625px;width:86px;height:26px;line-height:27px">Apply</div>
<div class="rb" style="left:595px;top:625px;width:86px;height:26px;line-height:27px">Help</div>
</div></body></html>
